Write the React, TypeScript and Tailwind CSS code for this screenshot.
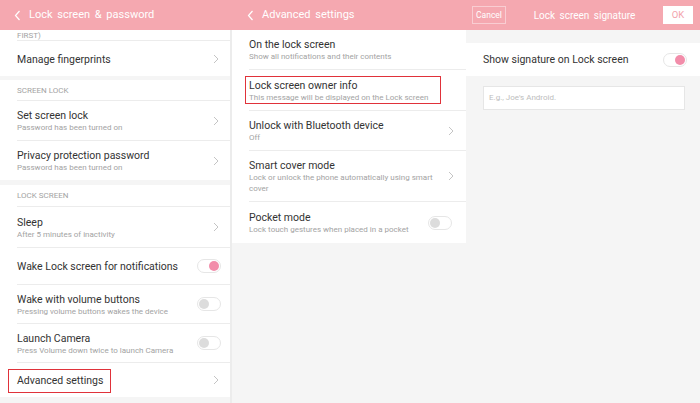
import React from "react";

const Chevron = () => (
  <svg width="6" height="10" viewBox="0 0 6 10" className="shrink-0">
    <polyline points="1,1 5,5 1,9" fill="none" stroke="#c4c4c4" strokeWidth="1" />
  </svg>
);

const Toggle = ({ on }: { on?: boolean }) => (
  <div className="w-[24px] h-[14px] rounded-full border border-[#e6e6e6] bg-white flex items-center px-[1px] shrink-0">
    {on ? (
      <div className="ml-auto w-[10px] h-[10px] rounded-full bg-[#f28daa]" />
    ) : (
      <div className="w-[10px] h-[10px] rounded-full bg-[#dcdcdc]" />
    )}
  </div>
);

const Back = () => (
  <svg width="7" height="11" viewBox="0 0 7 11" className="shrink-0">
    <polyline points="5.5,1 1.5,5.5 5.5,10" fill="none" stroke="#ffffff" strokeWidth="1.2" />
  </svg>
);

type RowProps = {
  title: string;
  sub?: string[];
  h: number;
  right?: React.ReactNode;
  divider?: boolean;
  pr?: string;
  box?: React.ReactNode;
};

const Row = ({ title, sub, h, right, divider = true, pr = "pr-[11px]", box }: RowProps) => (
  <div className="relative pl-[17px]" style={{ height: h }}>
    <div className={`flex items-center h-full ${pr} ${divider ? "border-b border-[#ececec]" : ""}`}>
      <div className="flex-1 flex flex-col justify-center min-w-0 pt-[1px]">
        <div className="text-[10.5px] leading-[13px] text-[#333333]">{title}</div>
        {sub &&
          sub.map((s, i) => (
            <div key={i} className="text-[8px] leading-[11px] text-[#a3a3a3]">
              {s}
            </div>
          ))}
      </div>
      {right}
    </div>
    {box}
  </div>
);

export default function App() {
  return (
    <div
      className="w-[700px] h-[403px] overflow-hidden bg-[#f5f5f5] flex flex-col"
      style={{ fontFamily: "Roboto, 'Noto Sans', sans-serif" }}
    >
      {/* Header */}
      <div className="h-[30px] bg-[#f5a8b0] flex shrink-0 text-white">
        <div className="w-[232px] flex items-center pl-[14px] gap-[8px]">
          <Back />
          <span className="text-[11px] [word-spacing:2px]">Lock screen &amp; password</span>
        </div>
        <div className="w-[234px] flex items-center pl-[15px] gap-[8px]">
          <Back />
          <span className="text-[11px] [word-spacing:2px]">Advanced settings</span>
        </div>
        <div className="w-[234px] flex items-center justify-between pl-[6px] pr-[7px]">
          <div className="h-[18px] w-[34px] border border-[#f9cdd2] flex items-center justify-center text-[8.5px]">
            Cancel
          </div>
          <span className="text-[10px] [word-spacing:2px]">Lock screen signature</span>
          <div className="h-[18px] w-[30px] bg-white flex items-center justify-center text-[9.5px] text-[#f3a3ac]">
            OK
          </div>
        </div>
      </div>

      <div className="flex flex-1 min-h-0">
        {/* Panel 1 */}
        <div className="w-[232px] flex flex-col border-r-[2px] border-[#ececec] bg-[#f5f5f5]">
          <div className="bg-white">
            <div className="h-[11px] pl-[17px]">
              <div className="h-full border-b border-[#ececec] flex items-center text-[8px] text-[#a3a3a3] leading-none pt-[1px]">
                FIRST)
              </div>
            </div>
            <Row title="Manage fingerprints" h={35} right={<Chevron />} divider={false} />
          </div>
          <div className="h-[4px] shrink-0" />
          <div className="bg-white">
            <div className="h-[21px] pl-[17px]">
              <div className="h-full border-b border-[#ececec] flex items-center text-[8px] text-[#a3a3a3] pt-[1px]">
                SCREEN LOCK
              </div>
            </div>
            <Row title="Set screen lock" sub={["Password has been turned on"]} h={40} right={<Chevron />} />
            <Row title="Privacy protection password" sub={["Password has been turned on"]} h={39} right={<Chevron />} divider={false} />
          </div>
          <div className="h-[5px] shrink-0" />
          <div className="bg-white">
            <div className="h-[22px] pl-[17px]">
              <div className="h-full border-b border-[#ececec] flex items-center text-[8px] text-[#a3a3a3] pt-[1px]">
                LOCK SCREEN
              </div>
            </div>
            <Row title="Sleep" sub={["After 5 minutes of inactivity"]} h={41} right={<Chevron />} />
            <Row title="Wake Lock screen for notifications" h={37} right={<Toggle on />} pr="pr-[9px]" />
            <Row title="Wake with volume buttons" sub={["Pressing volume buttons wakes the device"]} h={39} right={<Toggle />} pr="pr-[9px]" />
            <Row title="Launch Camera" sub={["Press Volume down twice to launch Camera"]} h={39} right={<Toggle />} pr="pr-[9px]" />
            <Row
              title="Advanced settings"
              h={34}
              right={<Chevron />}
              divider={false}
              box={<div className="absolute left-[8px] top-[6px] w-[103px] h-[24px] border border-[#e0323a]" />}
            />
          </div>
        </div>

        {/* Panel 2 */}
        <div className="w-[234px] flex flex-col">
          <div className="bg-white">
            <Row title="On the lock screen" sub={["Show all notifications and their contents"]} h={40} pr="pr-[12px]" />
            <Row
              title="Lock screen owner info"
              sub={["This message will be displayed on the Lock screen"]}
              h={41}
              pr="pr-[12px]"
              box={<div className="absolute left-[13px] top-[6px] w-[196px] h-[28px] border border-[#e0323a]" />}
            />
            <Row title="Unlock with Bluetooth device" sub={["Off"]} h={40} right={<Chevron />} pr="pr-[12px]" />
            <Row
              title="Smart cover mode"
              sub={["Lock or unlock the phone automatically using smart", "cover"]}
              h={51}
              right={<Chevron />}
              pr="pr-[12px]"
            />
            <Row title="Pocket mode" sub={["Lock touch gestures when placed in a pocket"]} h={41} right={<Toggle />} divider={false} pr="pr-[14px]" />
          </div>
        </div>

        {/* Panel 3 */}
        <div className="w-[234px] flex flex-col pt-[13px]">
          <div className="bg-white h-[33px] flex items-center pl-[17px] pr-[13px]">
            <span className="flex-1 text-[10.5px] text-[#333333]">Show signature on Lock screen</span>
            <Toggle on />
          </div>
          <div className="pl-[17px] pr-[15px] pt-[10px]">
            <div className="h-[24px] bg-white border border-[#e6e6e6] flex items-center pl-[5px] text-[8px] text-[#bdbdbd]">
              E.g., Joe's Android.
            </div>
          </div>
        </div>
      </div>
    </div>
  );
}
